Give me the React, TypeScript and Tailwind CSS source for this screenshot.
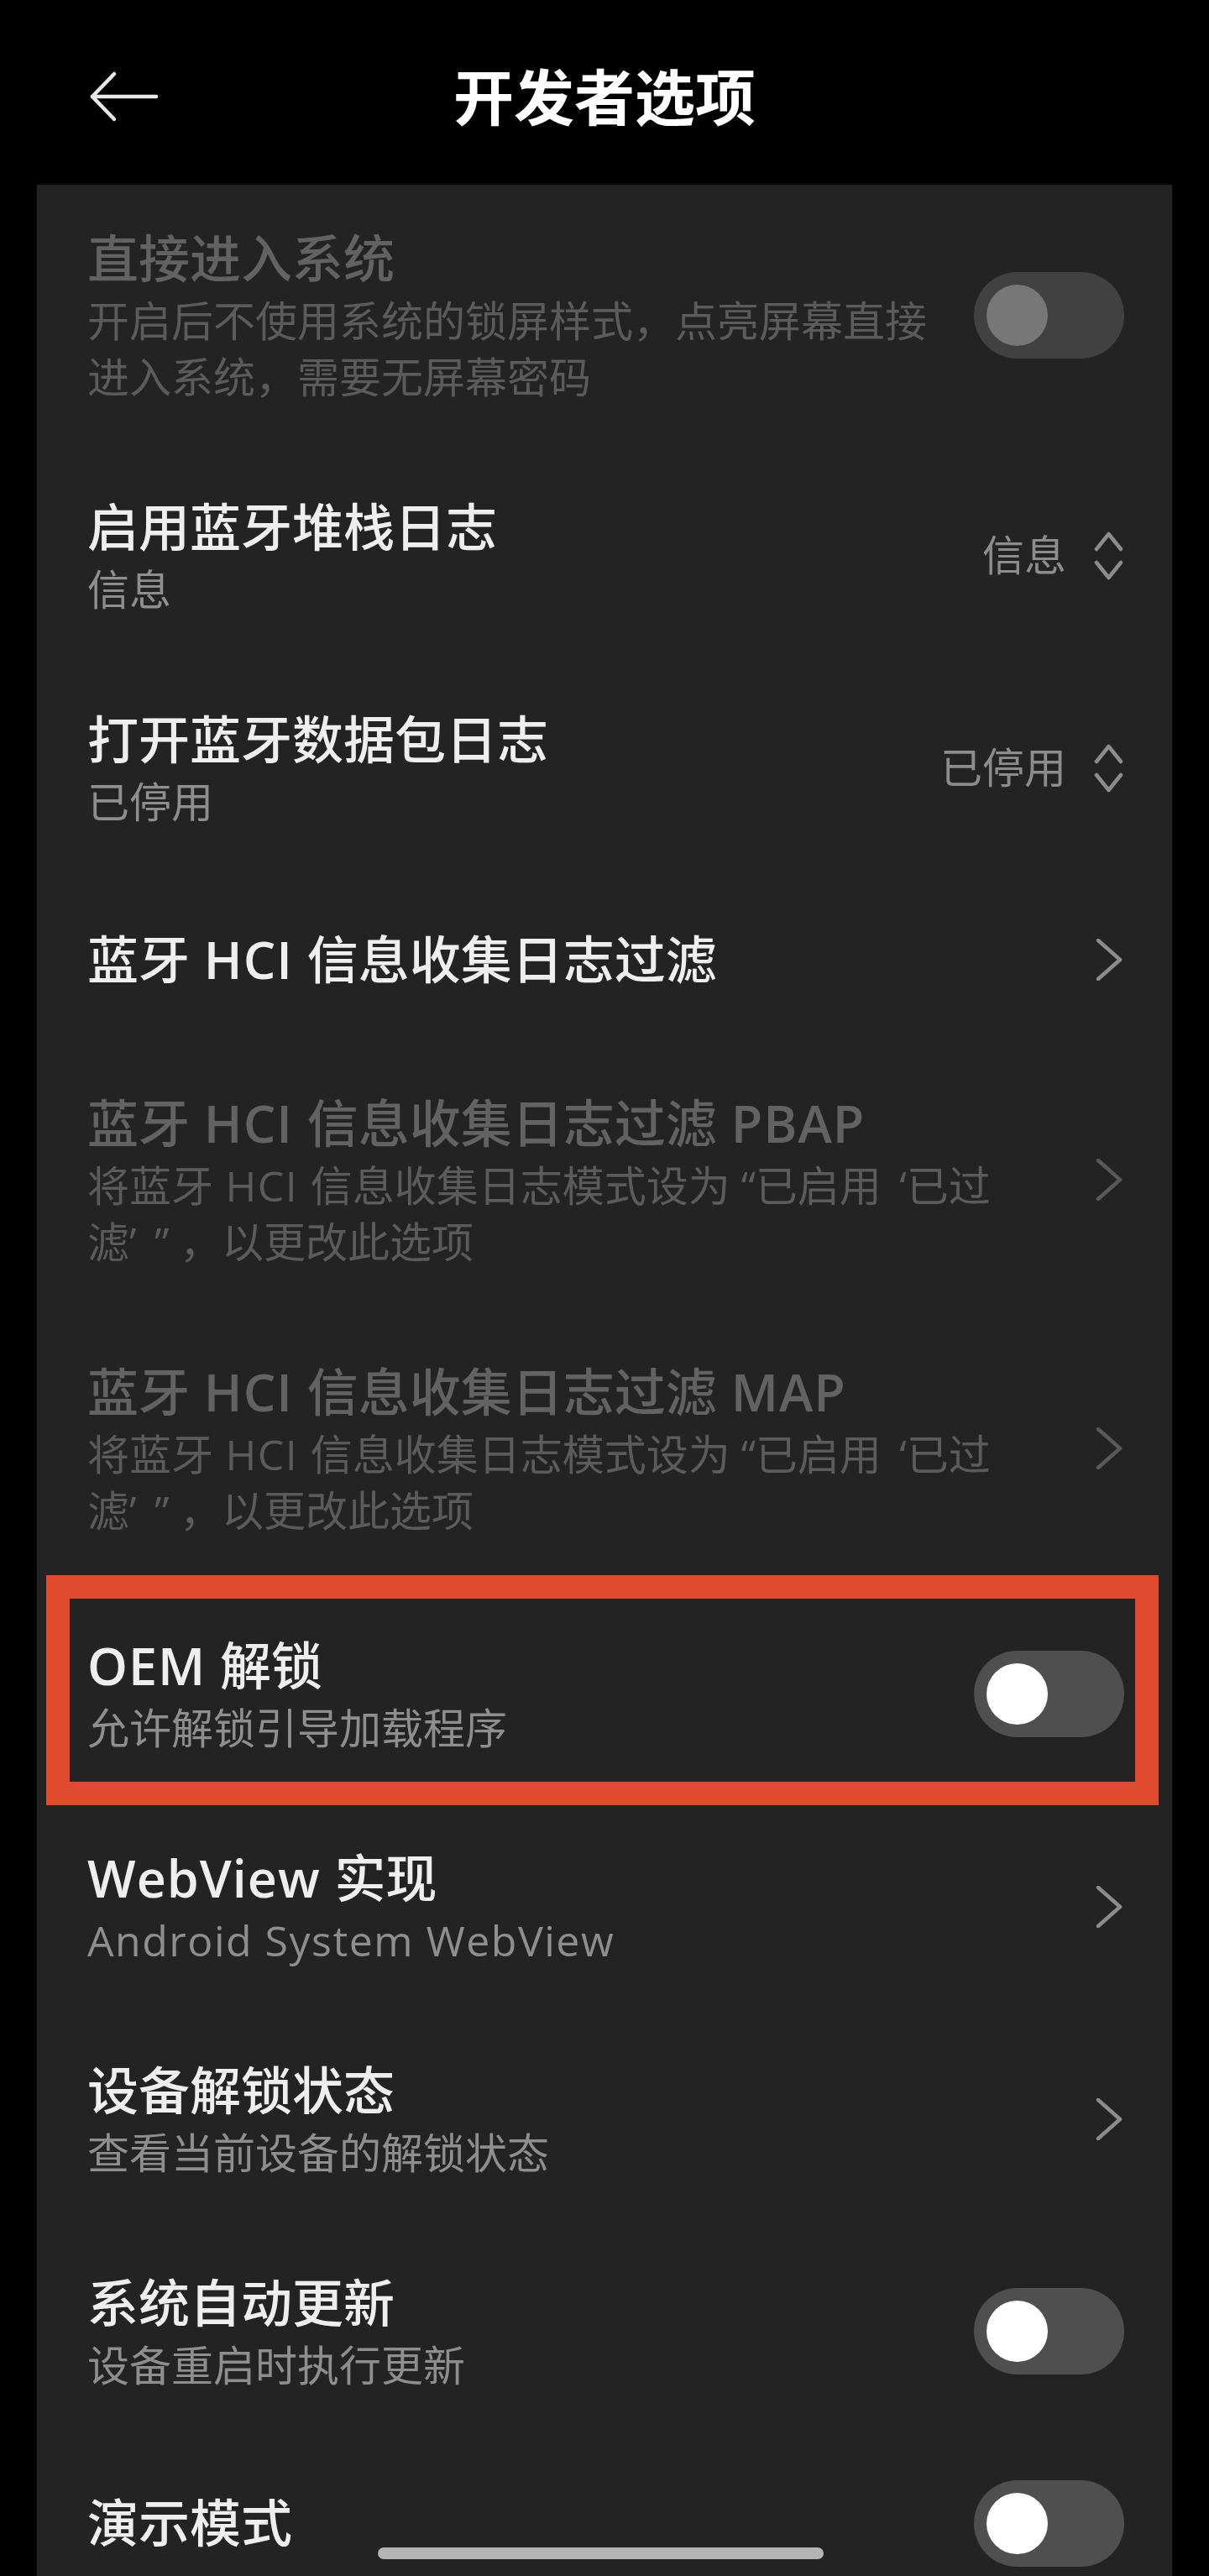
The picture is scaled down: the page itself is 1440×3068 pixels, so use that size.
import React from "react";

const FONT = { fontFamily: '"Open Sans", "Noto Sans CJK SC", sans-serif' };

function Toggle({ disabled }: { disabled?: boolean }) {
  return (
    <div
      className={
        "flex h-[103px] w-[179px] shrink-0 items-center rounded-full pl-[15px] " +
        (disabled ? "bg-[#414141]" : "bg-[#4f4f4f]")
      }
    >
      <div
        className={
          "h-[73px] w-[73px] rounded-full " +
          (disabled ? "bg-[#777777]" : "bg-white")
        }
      />
    </div>
  );
}

function Chevron({ disabled }: { disabled?: boolean }) {
  return (
    <svg width="37" height="50" viewBox="0 0 37 50" className="shrink-0">
      <polyline
        points="6,2 32,25 6,48"
        fill="none"
        stroke={disabled ? "#585858" : "#8c8c8c"}
        strokeWidth="4.5"
        strokeLinecap="round"
        strokeLinejoin="round"
      />
    </svg>
  );
}

function UpDown() {
  return (
    <svg width="37" height="58" viewBox="0 0 37 58" className="shrink-0">
      <g
        fill="none"
        stroke="#8c8c8c"
        strokeWidth="4.5"
        strokeLinecap="round"
        strokeLinejoin="round"
      >
        <polyline points="4,21 18.5,3 33,21" />
        <polyline points="4,37 18.5,55 33,37" />
      </g>
    </svg>
  );
}

function Value({ text }: { text: string }) {
  return (
    <div className="flex shrink-0 items-center gap-[32px]">
      <span className="text-[50px] leading-[67px] text-[#8c8c8c]">{text}</span>
      <UpDown />
    </div>
  );
}

function TL({ children }: { children: React.ReactNode }) {
  return <span className="font-semibold tracking-[1px]">{children}</span>;
}

function SL({ children }: { children: React.ReactNode }) {
  return <span className="tracking-[1.5px]">{children}</span>;
}

function Row({
  title,
  sub,
  right,
  disabled,
  className = "py-[52px]",
}: {
  title: React.ReactNode;
  sub?: React.ReactNode;
  right: React.ReactNode;
  disabled?: boolean;
  className?: string;
}) {
  return (
    <div className={"relative flex items-center justify-between gap-[40px] " + className}>
      <div className="min-w-0 flex-1">
        <div
          className={
            "whitespace-nowrap text-[61px] font-medium leading-[82px] " +
            (disabled ? "text-[#626262]" : "text-[#eeeeee]")
          }
        >
          {title}
        </div>
        {sub && (
          <div
            className={
              "whitespace-nowrap text-[50px] leading-[67px] " +
              (disabled ? "text-[#5b5b5b]" : "text-[#8e8e8e]")
            }
          >
            {sub}
          </div>
        )}
      </div>
      {right}
    </div>
  );
}

function Q({ c, open }: { c: string; open?: boolean }) {
  return (
    <span className={"inline-block w-[30px] " + (open ? "text-right" : "text-left")}>{c}</span>
  );
}

export default function App() {
  const hciSub = (
    <>
      将蓝牙<SL> HCI </SL>信息收集日志模式设为<Q c="“" open />已启用<Q c="‘" open />已过
      <br />
      滤<Q c="’" />
      <Q c="”" />，以更改此选项
    </>
  );
  return (
    <div className="relative h-[3068px] w-[1440px] overflow-hidden bg-black" style={FONT}>
      <header className="grid h-[220px] grid-cols-[1fr_auto_1fr] items-center pt-[10px]">
        <div className="pl-[106px]">
          <svg width="84" height="60" viewBox="0 0 84 60">
            <g
              fill="none"
              stroke="#e8e8e8"
              strokeWidth="4.5"
              strokeLinecap="round"
              strokeLinejoin="round"
            >
              <line x1="4" y1="30" x2="80" y2="30" />
              <polyline points="30,3 4,30 30,57" />
            </g>
          </svg>
        </div>
        <div className="text-[72px] font-bold leading-[90px] text-white">开发者选项</div>
        <div />
      </header>

      <main className="mx-[44px] bg-[#232323] pl-[60px] pr-[57px]">
        <Row
          className="pt-[47px] pb-[52px]"
          disabled
          title="直接进入系统"
          sub={
            <>
              开启后不使用系统的锁屏样式，点亮屏幕直接
              <br />
              进入系统，需要无屏幕密码
            </>
          }
          right={<Toggle disabled />}
        />
        <Row title="启用蓝牙堆栈日志" sub="信息" right={<Value text="信息" />} />
        <Row title="打开蓝牙数据包日志" sub="已停用" right={<Value text="已停用" />} />
        <Row
          className="min-h-[204px]"
          title={
            <>
              蓝牙<TL> HCI </TL>信息收集日志过滤
            </>
          }
          right={<Chevron />}
        />
        <Row
          disabled
          title={
            <>
              蓝牙<TL> HCI </TL>信息收集日志过滤<TL> PBAP</TL>
            </>
          }
          sub={hciSub}
          right={<Chevron disabled />}
        />
        <Row
          disabled
          title={
            <>
              蓝牙<TL> HCI </TL>信息收集日志过滤<TL> MAP</TL>
            </>
          }
          sub={hciSub}
          right={<Chevron disabled />}
        />
        <div className="relative mt-[6px]">
          <Row
            title={
              <>
                <TL>OEM </TL>解锁
              </>
            }
            sub="允许解锁引导加载程序"
            right={<Toggle />}
          />
          <div className="pointer-events-none absolute bottom-[-6px] left-[-49px] right-[-41px] top-[-15px] border-[28px] border-[#e04a2d]" />
        </div>
        <Row
          title={
            <>
              <TL>WebView </TL>实现
            </>
          }
          sub={<SL>Android System WebView</SL>}
          right={<Chevron />}
        />
        <Row title="设备解锁状态" sub="查看当前设备的解锁状态" right={<Chevron />} />
        <Row title="系统自动更新" sub="设备重启时执行更新" right={<Toggle />} />
        <Row className="min-h-[204px]" title="演示模式" right={<Toggle />} />
      </main>

      <div className="absolute bottom-[20px] left-[450px] h-[14px] w-[531px] rounded-full bg-[#b4b4b4]" />
    </div>
  );
}
